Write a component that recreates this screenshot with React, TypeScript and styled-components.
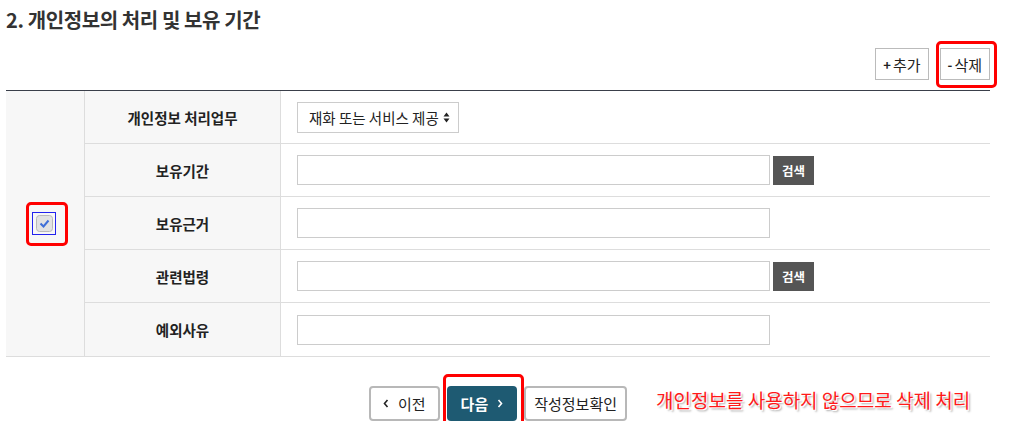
import React from "react";
import styled, { createGlobalStyle } from "styled-components";

const GlobalStyle = createGlobalStyle`
    body {
        margin: 0;
        background: #ffffff;
        font-family: "Noto Sans CJK KR", "Noto Sans", sans-serif;
        color: #222222;
    }
`;

const Page = styled.div`
    width: 984px;
    padding: 0 0 0 6px;
`;

const Title = styled.h2`
    margin: 0;
    padding-top: 6px;
    height: 34px;
    font-size: 20px;
    line-height: 28px;
    font-weight: 700;
    color: #333333;
    letter-spacing: -0.4px;
`;

const ToolRow = styled.div`
    display: flex;
    align-items: flex-start;
    justify-content: flex-end;
    gap: 11px;
    padding-top: 8px;
    height: 50px;
    box-sizing: border-box;
`;

type Pads = { $l: number; $r: number; $t: number; $b: number };

const Highlight = styled.span<Pads>`
    position: relative;
    display: inline-flex;
    height: fit-content;
    &::after {
        content: "";
        position: absolute;
        left: -${(p) => p.$l}px;
        right: -${(p) => p.$r}px;
        top: -${(p) => p.$t}px;
        bottom: -${(p) => p.$b}px;
        border: 3px solid #ff0000;
        border-radius: 5px;
        pointer-events: none;
    }
`;

const SmallButton = styled.button`
    display: inline-flex;
    align-items: center;
    gap: 2px;
    height: 32px;
    padding: 0 7px;
    border: 1px solid #bbbbbb;
    background: #ffffff;
    font-family: inherit;
    font-size: 15px;
    color: #222222;
    cursor: pointer;
`;

const Sign = styled.b`
    font-size: 13px;
    font-weight: 700;
`;

const Table = styled.div`
    display: grid;
    grid-template-columns: 78px 197px 1fr;
    grid-template-rows: repeat(5, 53px);
    border-top: 1px solid #3a3f4a;
    border-bottom: 1px solid #dddddd;
`;

const CheckCell = styled.div`
    grid-row: 1 / span 5;
    background: #f7f7f7;
    display: flex;
    align-items: center;
    justify-content: center;
    padding-right: 2px;
`;

const LabelCell = styled.div<{ $last?: boolean }>`
    grid-column: 2;
    background: #f7f7f7;
    border-left: 1px solid #dddddd;
    border-right: 1px solid #dddddd;
    border-bottom: ${(p) => (p.$last ? "none" : "1px solid #dddddd")};
    display: flex;
    align-items: center;
    justify-content: center;
    font-size: 14.5px;
    font-weight: 700;
    color: #222222;
`;

const ValueCell = styled.div<{ $last?: boolean }>`
    border-bottom: ${(p) => (p.$last ? "none" : "1px solid #dddddd")};
    display: flex;
    align-items: center;
    gap: 3px;
    padding-left: 16px;
`;

const TextInput = styled.div`
    width: 473px;
    height: 30px;
    box-sizing: border-box;
    border: 1px solid #cccccc;
    background: #ffffff;
`;

const SearchButton = styled.button`
    height: 29px;
    width: 41px;
    border: none;
    background: #555555;
    color: #ffffff;
    font-family: inherit;
    font-size: 12.5px;
    font-weight: 700;
    padding: 0;
`;

const Select = styled.div`
    display: inline-flex;
    align-items: center;
    gap: 4px;
    height: 31px;
    box-sizing: border-box;
    padding: 0 8px 0 11px;
    border: 1px solid #cccccc;
    font-size: 14.5px;
    color: #222222;
`;

const CheckFrame = styled.div`
    width: 24px;
    height: 23px;
    box-sizing: border-box;
    border: 1px solid #2222ee;
    display: flex;
    align-items: center;
    justify-content: center;
`;

const Footer = styled.div`
    display: flex;
    justify-content: center;
    padding-top: 29px;
`;

const NavGroup = styled.div`
    position: relative;
    display: flex;
    align-items: flex-start;
    gap: 7px;
`;

const NavButton = styled.button<{ $primary?: boolean; $padX: number }>`
    display: inline-flex;
    align-items: center;
    gap: 9px;
    height: 35px;
    padding: 0 ${(p) => p.$padX}px;
    border: ${(p) => (p.$primary ? "none" : "2px solid #b8b8b8")};
    border-radius: 4px;
    background: ${(p) => (p.$primary ? "#1e5a72" : "#ffffff")};
    color: ${(p) => (p.$primary ? "#ffffff" : "#222222")};
    font-family: inherit;
    font-size: 15px;
    font-weight: ${(p) => (p.$primary ? 700 : 400)};
`;

const Note = styled.div`
    position: absolute;
    left: calc(100% + 29px);
    top: 0;
    white-space: nowrap;
    font-size: 19px;
    color: #ff1a1a;
    text-shadow: 1px 1px 0 #ffffff, 2px 2px 2px rgba(0, 0, 0, 0.35);
`;

const Chevron = ({ dir }: { dir: "left" | "right" }) => (
    <svg width="6" height="9" viewBox="0 0 6 9">
        <path
            d={dir === "left" ? "M4.5 1 L1.5 4.5 L4.5 8" : "M1.5 1 L4.5 4.5 L1.5 8"}
            fill="none"
            stroke="currentColor"
            strokeWidth="1.6"
        />
    </svg>
);

const Arrows = () => (
    <svg width="7" height="11" viewBox="0 0 7 11">
        <path d="M3.5 0.5 L6.5 4.5 L0.5 4.5 Z" fill="#222" />
        <path d="M3.5 10.5 L6.5 6.5 L0.5 6.5 Z" fill="#222" />
    </svg>
);

const CheckIcon = () => (
    <svg width="17" height="17" viewBox="0 0 17 17">
        <rect x="0.5" y="0.5" width="16" height="16" rx="3" fill="#e2e2e2" stroke="#b9b9b9" />
        <path d="M4.5 8.5 L7.5 11.5 L12.5 5.5" fill="none" stroke="#3f6fd8" strokeWidth="2" />
    </svg>
);

const rows = [
    { label: "개인정보 처리업무", kind: "select" },
    { label: "보유기간", kind: "search" },
    { label: "보유근거", kind: "text" },
    { label: "관련법령", kind: "search" },
    { label: "예외사유", kind: "text" },
];

export default function App() {
    return (
        <Page>
            <GlobalStyle />
            <Title>2. 개인정보의 처리 및 보유 기간</Title>
            <ToolRow>
                <SmallButton>
                    <Sign>+</Sign>추가
                </SmallButton>
                <Highlight $l={4} $r={7} $t={7} $b={8}>
                    <SmallButton>
                        <Sign>-</Sign>삭제
                    </SmallButton>
                </Highlight>
            </ToolRow>
            <Table>
                <CheckCell>
                    <Highlight $l={6} $r={12} $t={10} $b={11}>
                        <CheckFrame>
                            <CheckIcon />
                        </CheckFrame>
                    </Highlight>
                </CheckCell>
                {rows.map((r, i) => {
                    const last = i === rows.length - 1;
                    return (
                        <React.Fragment key={r.label}>
                            <LabelCell $last={last}>{r.label}</LabelCell>
                            <ValueCell $last={last}>
                                {r.kind === "select" ? (
                                    <Select>
                                        재화 또는 서비스 제공 <Arrows />
                                    </Select>
                                ) : (
                                    <TextInput />
                                )}
                                {r.kind === "search" && <SearchButton>검색</SearchButton>}
                            </ValueCell>
                        </React.Fragment>
                    );
                })}
            </Table>
            <Footer>
                <NavGroup>
                    <NavButton $padX={12}>
                        <Chevron dir="left" />
                        이전
                    </NavButton>
                    <Highlight $l={4} $r={7} $t={12} $b={12}>
                        <NavButton $primary $padX={14}>
                            다음
                            <Chevron dir="right" />
                        </NavButton>
                    </Highlight>
                    <NavButton $padX={8}>작성정보확인</NavButton>
                    <Note>개인정보를 사용하지 않으므로 삭제 처리</Note>
                </NavGroup>
            </Footer>
        </Page>
    );
}
